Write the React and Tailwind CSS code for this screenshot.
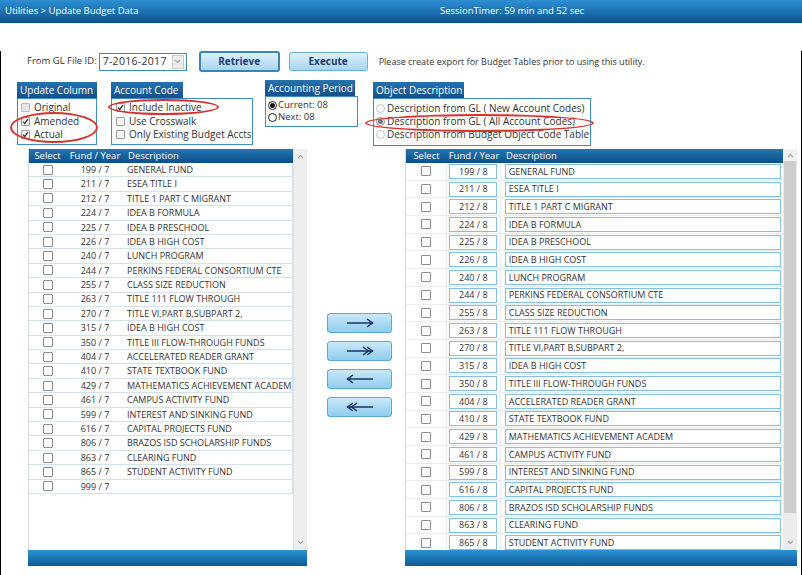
import React from 'react'

const FUNDS = [
  ['199', 'GENERAL FUND'],
  ['211', 'ESEA TITLE I'],
  ['212', 'TITLE 1 PART C MIGRANT'],
  ['224', 'IDEA B FORMULA'],
  ['225', 'IDEA B PRESCHOOL'],
  ['226', 'IDEA B HIGH COST'],
  ['240', 'LUNCH PROGRAM'],
  ['244', 'PERKINS FEDERAL CONSORTIUM CTE'],
  ['255', 'CLASS SIZE REDUCTION'],
  ['263', 'TITLE 111 FLOW THROUGH'],
  ['270', 'TITLE VI,PART B,SUBPART 2,'],
  ['315', 'IDEA B HIGH COST'],
  ['350', 'TITLE III FLOW-THROUGH FUNDS'],
  ['404', 'ACCELERATED READER GRANT'],
  ['410', 'STATE TEXTBOOK FUND'],
  ['429', 'MATHEMATICS ACHIEVEMENT ACADEM'],
  ['461', 'CAMPUS ACTIVITY FUND'],
  ['599', 'INTEREST AND SINKING FUND'],
  ['616', 'CAPITAL PROJECTS FUND'],
  ['806', 'BRAZOS ISD SCHOLARSHIP FUNDS'],
  ['863', 'CLEARING FUND'],
  ['865', 'STUDENT ACTIVITY FUND'],
]

const LEFT_ROWS = [...FUNDS, ['999', '']]

const Box = () => (
  <span className="block w-[10px] h-[10px] border border-[#8d8d8d] bg-white rounded-[1px]" />
)

function SmallCheck({ checked, disabled }) {
  return (
    <span className={`flex items-center justify-center w-[9px] h-[9px] border rounded-[1px] ${disabled ? 'border-[#b9b9b9] bg-[#e6e6e6]' : 'border-[#9a9a9a] bg-[#f4f4f4]'}`}>
      {checked && (
        <svg width="7" height="7" viewBox="0 0 7 7">
          <path d="M1 3.6 L2.8 5.4 L6 1.2" fill="none" stroke="#333" strokeWidth="1.3" />
        </svg>
      )}
    </span>
  )
}

function Radio({ checked, disabled, dark }) {
  return (
    <span className={`flex items-center justify-center w-[9px] h-[9px] rounded-full border ${dark ? 'border-[#222]' : disabled ? 'border-[#c4c4c4]' : 'border-[#8a8a8a]'} bg-white`}>
      {checked && <span className={`block w-[5px] h-[5px] rounded-full ${dark ? 'bg-[#111]' : 'bg-[#777]'}`} />}
    </span>
  )
}

const Caret = ({ up }) => (
  <svg width="7" height="5" viewBox="0 0 7 5">
    <path d={up ? 'M1 4 L3.5 1.5 L6 4' : 'M1 1 L3.5 3.5 L6 1'} fill="none" stroke="#a5a5a5" strokeWidth="1.1" />
  </svg>
)

function GroupBox({ title, headW, bodyW, bodyH, className = '', children }) {
  return (
    <div className={className}>
      <div className={`h-[16px] ${headW} bg-linear-to-b from-[#2672ad] to-[#14508a] text-white text-[10px] leading-[16px] pl-[3px] whitespace-nowrap`}>
        {title}
      </div>
      <div className={`${bodyW} ${bodyH} border border-[#3f8dc8] bg-white overflow-hidden`}>
        {children}
      </div>
    </div>
  )
}

function Arrow({ dir, double }) {
  const right = dir === 'right'
  return (
    <svg width="30" height="12" viewBox="0 0 30 12">
      <path d="M2 6 L28 6" stroke="#1b2f66" strokeWidth="1.5" />
      {right ? (
        <>
          <path d="M22 2 L27.5 6 L22 10" fill="none" stroke="#1b2f66" strokeWidth="1.5" />
          {double && <path d="M18 2 L23.5 6 L18 10" fill="none" stroke="#1b2f66" strokeWidth="1.5" />}
        </>
      ) : (
        <>
          <path d="M8 2 L2.5 6 L8 10" fill="none" stroke="#1b2f66" strokeWidth="1.5" />
          {double && <path d="M12 2 L6.5 6 L12 10" fill="none" stroke="#1b2f66" strokeWidth="1.5" />}
        </>
      )}
    </svg>
  )
}

function LeftTable() {
  return (
    <div className="w-[279px] h-[417px] flex flex-col">
      <div className="flex h-[401px]">
        <div className="w-[265px] flex flex-col border-l border-[#cdd9e3]">
          <div className="h-[14px] flex items-center bg-linear-to-b from-[#2477b6] to-[#0d4f86] text-white text-[9.5px]">
            <span className="w-[37px] text-center">Select</span>
            <span className="w-[58px] text-center">Fund / Year</span>
            <span className="pl-[4px]">Description</span>
          </div>
          {LEFT_ROWS.map(([f, d]) => (
            <div key={f} className="h-[14.4px] flex items-center border-b border-r border-[#cfe3f2] text-[9px] text-[#333]">
              <span className="w-[37px] flex justify-center"><Box /></span>
              <span className="w-[58px] text-center">{f} / 7</span>
              <span className="pl-[3px] whitespace-nowrap">{d}</span>
            </div>
          ))}
        </div>
        <div className="w-[14px] bg-[#eeeeee] border-l border-[#e0e0e0] flex flex-col items-center justify-between py-[5px]">
          <Caret up />
          <Caret />
        </div>
      </div>
      <div className="h-[16px] bg-linear-to-b from-[#2b93d4] to-[#0d5a96]" />
    </div>
  )
}

function RightTable() {
  return (
    <div className="w-[392px] h-[417px] flex flex-col">
      <div className="flex h-[401px]">
        <div className="w-[378px] flex flex-col overflow-hidden border-l border-[#cdd9e3]">
          <div className="h-[14px] shrink-0 flex items-center bg-linear-to-b from-[#2477b6] to-[#0d4f86] text-white text-[9.5px]">
            <span className="w-[41px] text-center">Select</span>
            <span className="w-[54px] text-center">Fund / Year</span>
            <span className="pl-[5px]">Description</span>
          </div>
          {FUNDS.map(([f, d]) => (
            <div key={f} className="h-[17.7px] shrink-0 flex items-center border-b border-[#e2edf5] text-[9px] text-[#333]">
              <span className="w-[41px] h-full flex items-center justify-center border-r border-[#e2edf5]"><Box /></span>
              <span className="w-[54px] h-full flex items-center justify-center border-r border-[#e2edf5]">
                <span className="w-[48px] h-[15px] border border-[#84bfe4] flex items-center justify-center">{f} / 8</span>
              </span>
              <span className="w-[283px] h-full flex items-center pl-[4px]">
                <span className="w-[276px] h-[15px] border border-[#84bfe4] flex items-center pl-[3px] whitespace-nowrap">{d}</span>
              </span>
            </div>
          ))}
        </div>
        <div className="w-[14px] flex flex-col bg-[#ececec]">
          <div className="h-[12px] bg-[#f1f1f1] flex items-center justify-center"><Caret up /></div>
          <div className="h-[352px] bg-[#cdcdcd] mx-[1px]" />
          <div className="flex-1 flex items-end justify-center pb-[5px]"><Caret /></div>
        </div>
      </div>
      <div className="h-[16px] bg-linear-to-b from-[#2b93d4] to-[#0d5a96]" />
    </div>
  )
}

export default function App() {
  return (
    <div className="relative w-[802px] h-[575px] bg-white overflow-hidden font-['Open_Sans',sans-serif]">
      <div className="h-[23px] flex items-center bg-linear-to-b from-[#2d8fd2] to-[#0b5590] text-white text-[9.5px]">
        <span className="w-[440px] pl-[5px]">Utilities &gt; Update Budget Data</span>
        <span>SessionTimer: 59 min and 52 sec</span>
      </div>

      <div className="h-[552px] border-l border-r border-b-2 border-black">
        {/* form row */}
        <div className="mt-[28px] h-[21px] flex items-center pl-[26px] text-[#333]">
          <span className="text-[9.5px]">From GL File ID:</span>
          <div className="ml-[2px] w-[88px] h-[18px] border border-[#3d87c2] bg-white flex items-center">
            <span className="flex-1 pl-[3px] text-[10.5px] leading-none tracking-[0.3px]">7-2016-2017</span>
            <span className="w-[12px] h-[14px] mr-[2px] border border-[#c9c9c9] bg-[#ececec] flex items-center justify-center">
              <Caret />
            </span>
          </div>
          <button className="ml-[12px] w-[81px] h-[21px] rounded-[3px] border-2 border-[#3a84b6] bg-linear-to-b from-[#dcf1fb] to-[#a7d6f1] text-[10px] font-bold text-[#1e3d6e]">
            Retrieve
          </button>
          <button className="ml-[9px] w-[79px] h-[19px] rounded-[3px] border border-[#6aaedb] bg-linear-to-b from-[#dcf1fb] to-[#a7d6f1] text-[10px] font-bold text-[#1e3d6e]">
            Execute
          </button>
          <span className="ml-[11px] text-[9px]">Please create export for Budget Tables prior to using this utility.</span>
        </div>

        {/* option groups */}
        <div className="mt-[8px] flex items-start pl-[16px] text-[10px] text-[#333]">
          <GroupBox title="Update Column" headW="w-[80px]" bodyW="w-[80px]" bodyH="h-[47px]" className="mt-[2px]">
            <div className="pt-[2px] pl-[3px] leading-[13.5px]">
              <div className="flex items-center gap-[4px]"><SmallCheck disabled /><span>Original</span></div>
              <div className="flex items-center gap-[4px]"><SmallCheck checked /><span>Amended</span></div>
              <div className="flex items-center gap-[4px]"><SmallCheck checked /><span>Actual</span></div>
            </div>
          </GroupBox>
          <GroupBox title="Account Code" headW="w-[72px]" bodyW="w-[142px]" bodyH="h-[47px]" className="ml-[14px] mt-[2px]">
            <div className="pt-[2px] pl-[4px] leading-[13.5px]">
              <div className="flex items-center gap-[4px]"><SmallCheck checked /><span>Include Inactive</span></div>
              <div className="flex items-center gap-[4px]"><SmallCheck /><span>Use Crosswalk</span></div>
              <div className="flex items-center gap-[4px]"><SmallCheck /><span>Only Existing Budget Accts</span></div>
            </div>
          </GroupBox>
          <GroupBox title="Accounting Period" headW="w-[90px]" bodyW="w-[93px]" bodyH="h-[31px]" className="ml-[12px]">
            <div className="pt-[2px] pl-[2px] leading-[12px] text-[9.5px]">
              <div className="flex items-center gap-[1px]"><Radio checked dark /><span>Current: 08</span></div>
              <div className="flex items-center gap-[1px]"><Radio dark /><span>Next: 08</span></div>
            </div>
          </GroupBox>
          <GroupBox title="Object Description" headW="w-[91px]" bodyW="w-[218px]" bodyH="h-[48px]" className="ml-[15px] mt-[2px]">
            <div className="pt-[3px] pl-[2px] leading-[13px]">
              <div className="flex items-center gap-[2px]"><Radio disabled /><span>Description from GL ( New Account Codes)</span></div>
              <div className="flex items-center gap-[2px]"><Radio checked /><span>Description from GL ( All Account Codes)</span></div>
              <div className="flex items-center gap-[2px]"><Radio disabled /><span>Description from Budget Object Code Table</span></div>
            </div>
          </GroupBox>
        </div>

        {/* tables */}
        <div className="mt-[3px] flex items-start pl-[27px]">
          <LeftTable />
          <div className="ml-[20px] mt-[164px] flex flex-col gap-[8px]">
            {[['right', false], ['right', true], ['left', false], ['left', true]].map(([d, dbl], i) => (
              <button key={i} className="w-[65px] h-[20px] rounded-[3px] border border-[#5ea7d8] bg-linear-to-b from-[#c9e9f9] to-[#8fcdef] flex items-center justify-center">
                <Arrow dir={d} double={dbl} />
              </button>
            ))}
          </div>
          <div className="ml-[13px]">
            <RightTable />
          </div>
        </div>
      </div>

      {/* red annotation ellipses */}
      <div className="absolute left-[10px] top-[112px] w-[88px] h-[31px] rounded-[50%] border-2 border-[#d8322c]" />
      <div className="absolute left-[108px] top-[99px] w-[111px] h-[16px] rounded-[50%] border-2 border-[#d8322c]" />
      <div className="absolute left-[365px] top-[114px] w-[229px] h-[18px] rounded-[50%] border-2 border-[#d8322c]" />
    </div>
  )
}
